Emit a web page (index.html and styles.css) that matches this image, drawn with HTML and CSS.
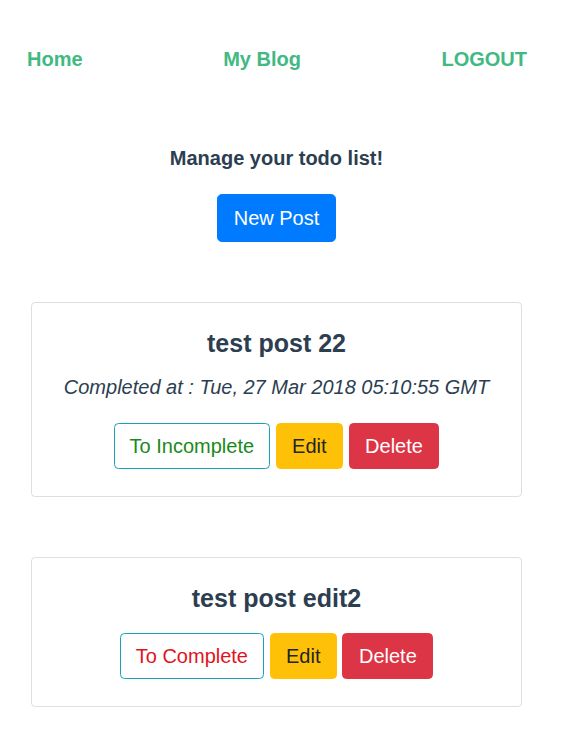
FILE: index.html
```html
<!DOCTYPE html>
<html>
<head>
<meta charset="utf-8">
<link rel="stylesheet" href="styles.css">
</head>
<body>
<div class="app">
  <nav class="nav">
    <a class="nav-link" href="#">Home</a>
    <a class="nav-link" href="#">My Blog</a>
    <a class="nav-link" href="#">LOGOUT</a>
  </nav>
  <h2 class="heading">Manage your todo list!</h2>
  <div class="new-row"><button class="btn btn-primary btn-lg">New Post</button></div>
  <div class="cards">
    <div class="card">
      <h3 class="card-title">test post 22</h3>
      <p class="completed">Completed at : Tue, 27 Mar 2018 05:10:55 GMT</p>
      <div class="actions">
        <button class="btn btn-outline text-green">To Incomplete</button>
        <button class="btn btn-warning">Edit</button>
        <button class="btn btn-danger">Delete</button>
      </div>
    </div>
    <div class="card">
      <h3 class="card-title">test post edit2</h3>
      <div class="actions">
        <button class="btn btn-outline text-red">To Complete</button>
        <button class="btn btn-warning">Edit</button>
        <button class="btn btn-danger">Delete</button>
      </div>
    </div>
  </div>
</div>
</body>
</html>
```
FILE: styles.css
```css
* { box-sizing: border-box; }
html, body { margin: 0; padding: 0; background: #fff; }
body {
  font-family: "Liberation Sans", Arial, sans-serif;
  color: #2c3e50;
}
.app { width: 553px; }
.nav {
  display: flex;
  justify-content: space-between;
  padding: 47px 26px 0 27px;
}
.nav-link {
  color: #42b983;
  font-weight: bold;
  font-size: 20px;
  line-height: 24px;
  text-decoration: none;
}
.heading {
  margin: 75px 0 0;
  text-align: center;
  font-size: 20px;
  line-height: 24px;
  font-weight: bold;
}
.new-row {
  display: flex;
  justify-content: center;
  margin-top: 24px;
}
.btn {
  font-family: "Liberation Sans", Arial, sans-serif;
  font-size: 20px;
  line-height: 30px;
  height: 46px;
  padding: 7px 15.5px;
  border: 1px solid transparent;
  border-radius: 4.5px;
  background: transparent;
  cursor: pointer;
}
.btn-lg { height: 48px; padding: 8px 16px; border-radius: 4.8px; }
.btn-primary { background: #007bff; border-color: #007bff; color: #fff; }
.btn-warning { background: #ffc107; border-color: #ffc107; color: #212529; }
.btn-danger { background: #dc3545; border-color: #dc3545; color: #fff; }
.btn-outline { border-color: #17a2b8; background: #fff; padding: 7px 15px; }
.text-green { color: #1a8a1a; }
.text-red { color: #e0141e; }
.cards {
  margin: 60px 31px 0;
  display: flex;
  flex-direction: column;
  gap: 60px;
}
.card {
  border: 1px solid rgba(0, 0, 0, 0.125);
  border-radius: 4px;
  padding: 20px 20px 27px;
  text-align: center;
}
.card-title {
  margin: 0 0 15px;
  font-size: 25px;
  line-height: 40px;
  font-weight: bold;
}
.completed {
  margin: 0 0 27px;
  font-style: italic;
  font-size: 20px;
  line-height: 18px;
}
.actions {
  display: flex;
  justify-content: center;
  gap: 5.5px;
}
```
